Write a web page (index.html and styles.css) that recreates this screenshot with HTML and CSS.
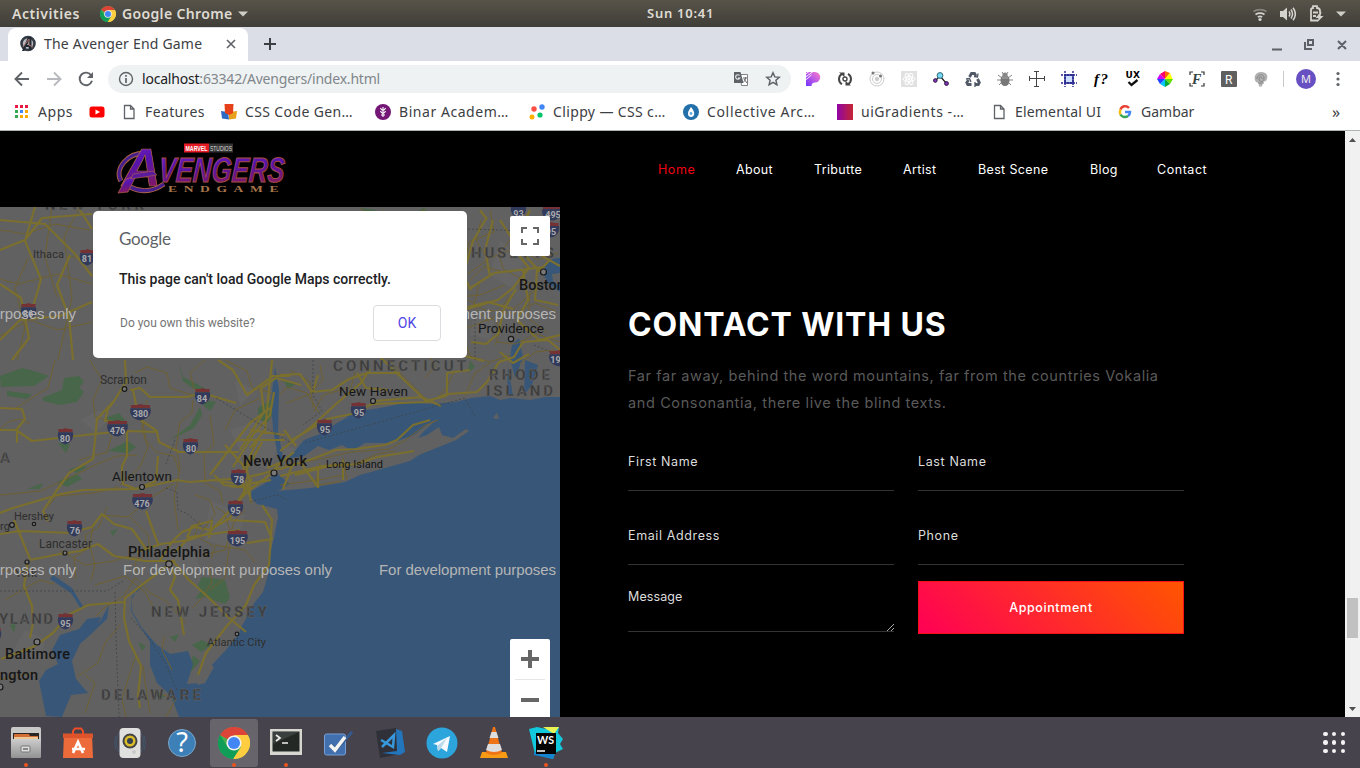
FILE: index.html
```html
<!DOCTYPE html>
<html lang="en">
<head>
<meta charset="utf-8">
<title>The Avenger End Game</title>
<link rel="stylesheet" href="styles.css">
</head>
<body>
<svg class="defs" width="0" height="0">
  <defs>
    <symbol id="chrome" viewBox="0 0 32 32">
      <circle cx="16" cy="16" r="16" fill="#4caf50"/>
      <path d="M16 16 2.1 8A16 16 0 0 1 29.9 8H16z" fill="#db4437"/>
      <path d="M16 8H29.9A16 16 0 0 1 15 32L23 20z" fill="#ffcd40"/>
      <path d="M2.1 8A16 16 0 0 0 15 32L21.5 21 9 19z" fill="#0f9d58"/>
      <circle cx="16" cy="16" r="7.6" fill="#f1f1f1"/><circle cx="16" cy="16" r="6" fill="#4285f4"/>
    </symbol>
    <symbol id="doc" viewBox="0 0 16 16"><path d="M3.500 1.500h6l3.500 3.500v9.500h-9.500zM9.500 1.500v3.500h3.500" fill="none" stroke="#5f6368" stroke-width="1.300"/></symbol>
    <symbol id="shield" viewBox="0 0 24 16" preserveAspectRatio="none">
      <path d="M2 1h6l4-1 4 1h6v3H2z" fill="#743235"/>
      <path d="M1.500 4h21c1.500 6-3 10-10.500 11.500C4.500 14.500 0 10.500 1.500 4z" fill="#323a5b"/>
    </symbol>
    <linearGradient id="purple" x1="0" y1="0" x2=".2" y2="1"><stop offset="0" stop-color="#7b22c8"/><stop offset=".5" stop-color="#5514aa"/><stop offset="1" stop-color="#85195f"/></linearGradient>
  </defs>
</svg>
<div class="desktop">
  <header class="topbar">
    <span class="activities">Activities</span>
    <span class="appmenu"><svg width="16" height="16"><use href="#chrome"/></svg><span>Google Chrome</span><svg width="10" height="6"><path d="M0 .5h10L5 5.500z" fill="#cfcdc8"/></svg></span>
    <span class="clock">Sun 10:41</span>
    <span class="tray">
      <svg width="16" height="16" viewBox="0 0 16 16" fill="none" stroke-width="1.800"><path d="M1.500 5.500a9 6 0 0 1 13 0" stroke="#86837c"/><path d="M3.500 8.500a7 5 0 0 1 9 0M5.800 11a4 3 0 0 1 4.400 0" stroke="#d5d3ce"/><circle cx="8" cy="13.500" r="1.600" fill="#d5d3ce"/></svg>
      <svg width="16" height="16" viewBox="0 0 16 16"><path d="M0 5h3l4-3.500v13L3 11H0z" fill="#d5d3ce"/><path d="M9 5.500c1 1.500 1 3.500 0 5M11 3.500c2 3 2 6 0 9M13 1.800c3 4 3 8.500 0 12.500" fill="none" stroke="#d5d3ce" stroke-width="1.500"/></svg>
      <svg width="16" height="17" viewBox="0 0 16 17"><path d="M10 15.500H3v-11q0-1.500 2-1.500V1.200h4V3q3 0 3 3v2M5 7.500h5M5 11h3" fill="none" stroke="#d5d3ce" stroke-width="1.800"/><path d="m12.500 7-5 6h3l-1 4 6-6h-3l1-4z" fill="#d5d3ce"/></svg>
      <svg width="10" height="6"><path d="M0 .5h10L5 5.500z" fill="#cfcdc8"/></svg>
    </span>
  </header>

  <div class="tabstrip">
    <div class="tab">
      <svg width="17" height="17" viewBox="0 0 17 17"><circle cx="8" cy="8.500" r="6.500" fill="#b9bcc0" stroke="#343b45" stroke-width="2.600"/><path d="M2 16 8 2h3.500v13H8.800v-3H6l-1.500 4zM9 6l-1.800 4H9z" fill="#232a34"/><path d="m3 12 6-8v6l4 2" fill="none" stroke="#a8716b"/></svg>
      <span class="tab-title">The Avenger End Game</span>
      <svg class="tab-close" width="10" height="10"><path d="m1 1 8 8M9 1 1 9" stroke="#5f6368" stroke-width="1.600"/></svg>
    </div>
    <svg class="plus" width="12" height="12"><path d="M6 0v12M0 6h12" stroke="#3b3f44" stroke-width="2"/></svg>
    <svg class="window-buttons" width="76" height="14" viewBox="0 0 76 14" fill="none" stroke="#5d6067" stroke-width="2"><path d="M0 11.500h10M33 4v7h7M36 2h5v5h-5zM66 3l8 8M74 3l-8 8"/></svg>
  </div>

  <div class="toolbar">
    <div class="nav-icons">
      <svg width="16" height="16" viewBox="0 0 16 16" fill="none" stroke="#5f6368" stroke-width="1.900"><path d="M15 8H2M8 1.500 1.500 8 8 14.500"/></svg>
      <svg width="16" height="16" viewBox="0 0 16 16" fill="none" stroke="#b7b9bc" stroke-width="1.900"><path d="M1 8h13M8 1.500 14.500 8 8 14.500"/></svg>
      <svg width="16" height="16" viewBox="0 0 16 16"><path d="M13.300 4.500A6.300 6.300 0 1 0 14 9.800" fill="none" stroke="#5f6368" stroke-width="1.900"/><path d="M15 1v6H9z" fill="#5f6368"/></svg>
    </div>
    <div class="omnibox">
      <svg width="16" height="16" viewBox="0 0 16 16"><circle cx="8" cy="8" r="6.500" fill="none" stroke="#5f6368" stroke-width="1.400"/><path d="M8 4v1.700M8 7v5" stroke="#5f6368" stroke-width="1.700"/></svg>
      <span class="url"><b>localhost</b>:63342/Avengers/index.html</span>
      <svg class="translate" width="16" height="16" viewBox="0 0 16 16"><path d="M7 3.500h7.500v11H8.500z" fill="#fff" stroke="#80848a"/><path d="M1 1h6.500l3 11H1z" fill="#5f6368"/><path d="M6.500 4.500a2.200 2.200 0 1 0 .3 2.500H5" fill="none" stroke="#e2e4e6" stroke-width="1.200"/><path d="M10 7h4M12.500 6v1c0 2-1 3-2 4M11 8l3 4" fill="none" stroke="#666"/></svg>
      <svg width="16" height="16" viewBox="0 0 16 16"><path d="m8 1.800 1.800 4.100 4.500.4-3.400 3 1 4.400L8 11.400l-3.900 2.300 1-4.400-3.400-3 4.500-.4z" fill="none" stroke="#5f6368" stroke-width="1.500"/></svg>
    </div>
    <div class="extensions">
      <svg viewBox="0 0 16 16"><defs><linearGradient id="pp" x1="1" y1="0" x2="0" y2="1"><stop stop-color="#ff7ecb"/><stop offset="1" stop-color="#7334ff"/></linearGradient></defs><path d="M1 1h9a5 5 0 0 1 0 10.500q-3.500 0-3.500 3.500H1z" fill="url(#pp)"/><path d="m0 3.500 4-3M0 6.500 8 .5M0 9.500 6.500 4" stroke="#fff" stroke-width=".9"/></svg>
      <svg viewBox="0 0 16 16" fill="none" stroke="#454545" stroke-width="2"><path d="M5 13.200A6 6 0 0 1 5 2.800M11 2.800a6 6 0 0 1 0 10.400"/><path d="M2 1.500h5.500V6zM14 14.500H8.500V10z" fill="#454545" stroke="none"/><circle cx="8" cy="8" r="2" stroke-width="1.400"/></svg>
      <svg viewBox="0 0 16 16" fill="none" stroke="#cbcbcb"><circle cx="8" cy="8" r="7"/><circle cx="8" cy="8" r="4.500"/><circle cx="8" cy="8" r="1.800" fill="#ccc"/><circle cx="4" cy="2" r="1.500" fill="#777" stroke="none"/><circle cx="11.500" cy="5" r="1.500" fill="#777" stroke="none"/></svg>
      <svg viewBox="0 0 16 16"><path d="M0 0h16v16H0z" fill="#e1e1e1"/><g fill="none" stroke="#fff"><ellipse cx="8" cy="8" rx="6" ry="2.500"/><ellipse cx="8" cy="8" rx="6" ry="2.500" transform="rotate(60 8 8)"/><ellipse cx="8" cy="8" rx="6" ry="2.500" transform="rotate(120 8 8)"/></g><circle cx="8" cy="8" r="1.500" fill="#fff"/></svg>
      <svg viewBox="0 0 16 16"><path d="M2 10 7 5l6 7" fill="none" stroke="#222" stroke-width="1.200"/><circle cx="7" cy="4.500" r="2.900" fill="#75d8f4" stroke="#336678"/><circle cx="2.300" cy="9.500" r="1.800" fill="#8135bd" stroke="#281138"/><circle cx="13.500" cy="12.500" r="1.900" fill="#8135bd" stroke="#281138"/></svg>
      <svg viewBox="0 0 16 16" fill="none" stroke="#515967" stroke-width="2.800"><path d="m4.500 6 2-3.500h3L11 5M12.500 8l1.800 3.500-1 2H10M6.500 13.500H2.800l-1-2L3.500 9"/><path d="m9 5.500 3.500.5.500-3.500M10 11v5M1 8l3.500-.5L6 11" stroke-width="1.300"/></svg>
      <svg viewBox="0 0 16 16"><path d="M1 4l4 3M15 4l-4 3M0 9h16M2 14l4-4M14 14l-4-4M5 1l2 3M11 1 9 4" stroke="#858585"/><ellipse cx="8" cy="9.500" rx="4.500" ry="5.500" fill="#777"/><circle cx="8" cy="4" r="2.600" fill="#888"/><path d="M5 7h6" stroke="#aaa"/></svg>
      <svg viewBox="0 0 16 16" fill="none" stroke="#444"><path d="M7.500 1v14M1 7.500h14M5 .5h5M5 15.500h5M.5 5v5M15.500 5v5"/></svg>
      <svg viewBox="0 0 16 16" fill="none" stroke="#24248d" stroke-width="1.400"><path fill="#cfe0ff" d="M4 4h8v8H4z"/><path d="M4 0v16M12 0v16M0 4h16M0 12h16" stroke-dasharray="2 1"/></svg>
      <svg viewBox="0 0 16 16"><text class="serif-icon" x="1" y="12.500" textLength="14">f?</text></svg>
      <svg viewBox="0 0 16 16"><text class="ux-icon" x=".5" y="7" textLength="14.500">UX</text><path d="m3.500 11 3 3 6-5" fill="none" stroke="#111" stroke-width="2.300"/></svg>
      <svg viewBox="0 0 16 16"><path d="M8 8V0l5 2z" fill="#ff6700"/><path d="m8 8 5-6 2.500 6z" fill="#ff0"/><path d="M8 8h8l-3 5z" fill="#64e000"/><path d="m8 8 5 5-5 3z" fill="#00a938"/><path d="M8 8v8l-5-3z" fill="#00c8ff"/><path d="m8 8-5 5-3-5z" fill="#2445ff"/><path d="M8 8H0l3-5z" fill="#d000ff"/><path d="M8 8 3 3l5-3z" fill="#f06"/></svg>
      <svg viewBox="0 0 16 16"><path d="M1 4V1h3M12 1h3v3M15 12v3h-3M4 15H1v-3" fill="none" stroke="#333" stroke-width="1.200"/><text class="script-icon" x="3" y="13">F</text></svg>
      <svg viewBox="0 0 16 16"><rect width="16" height="16" rx="1" fill="#5f5f5f"/><text class="r-icon" x="4" y="12.500">R</text></svg>
      <svg viewBox="0 0 16 16"><path d="M3 11C0 7 2 1 8 1s8 4 5 9l-3 1-1 4.500H6L5.500 12z" fill="#b1b1b1"/><path d="M4 8c0-5 7-6 7-1s-5 4-5 1 3-3 3 0M5 12h6" fill="none" stroke="#858585"/></svg>
    </div>
    <span class="divider"></span><span class="avatar">M</span>
    <svg width="4" height="16"><g fill="#5f6368"><circle cx="2" cy="2.500" r="1.600"/><circle cx="2" cy="8" r="1.600"/><circle cx="2" cy="13.500" r="1.600"/></g></svg>
  </div>

  <nav class="bookmarks">
    <span class="bm"><svg viewBox="0 0 16 16"><path d="M1 1h3v3H1zM6 1h3v3H6zM11 1h3v3h-3z" fill="#ea1744"/><path d="M1 6h3v3H1zM1 11h3v3H1z" fill="#34a853"/><path d="M6 6h3v3H6z" fill="#4285f4"/><path d="M11 6h3v3h-3zM6 11h3v3H6zM11 11h3v3h-3z" fill="#fbaa05"/></svg><span class="t1">Apps</span></span>
    <span class="bm"><svg viewBox="0 0 16 16"><rect y="2.500" x=".5" width="15" height="11" rx="2.500" fill="red"/><path d="M6.500 5.500v5L11 8z" fill="#fff"/></svg></span>
    <span class="bm"><svg><use href="#doc"/></svg><span class="t2">Features</span></span>
    <span class="bm"><svg viewBox="0 0 16 16"><path d="m0 7 7 1 1 7.500-7-1z" fill="#2b6bc4"/><path d="M16 7 8 8v7.500l7-1z" fill="#e9a11c"/><path d="M3.500 0h9L12 9l-4 2-4-2z" fill="#e54019"/></svg><span class="t3">CSS Code Gen…</span></span>
    <span class="bm"><svg viewBox="0 0 16 16"><circle cx="8" cy="8" r="8" fill="#731675"/><path d="M8 3v10M5.500 4q1 2.500 2.500 2 1.500.5 2.500-2M5.500 7q1 2.500 2.500 2 1.500.5 2.500-2M6 11h4" fill="none" stroke="#fff" stroke-width="1.100"/></svg><span class="t4">Binar Academ…</span></span>
    <span class="bm"><svg viewBox="0 0 16 16"><circle cx="5" cy="5" r="2.700" fill="#fb4f43"/><circle cx="13" cy="3" r="2.700" fill="#4285f4"/><circle cx="3" cy="13" r="2.500" fill="#fbb100"/><circle cx="11" cy="11" r="2.600" fill="#07c46b"/></svg><span class="t5">Clippy — CSS c…</span></span>
    <span class="bm"><svg viewBox="0 0 16 16"><circle cx="8" cy="8" r="8" fill="#236fa9"/><path d="M8 3q5 6 2.500 9-2.500 2-5 0Q3.500 9 8 3" fill="#fff"/><circle cx="8" cy="9.500" r="1.400" fill="#63aade"/></svg><span class="t6">Collective Arc…</span></span>
    <span class="bm"><i class="gradient-icon"></i><span class="t7">uiGradients -…</span></span>
    <span class="bm"><svg><use href="#doc"/></svg><span class="t8">Elemental UI</span></span>
    <span class="bm"><svg viewBox="0 0 16 16" fill="none" stroke-width="2.500"><path d="M12 4A5 5 0 0 0 3.500 5.500" stroke="#ea4335"/><path d="M3.500 5.500a5 5 0 0 0 0 5" stroke="#fbbc05"/><path d="M3.500 10.500A5 5 0 0 0 11 12" stroke="#34a853"/><path d="M8 8h5c0 2-.5 3-2 4" stroke="#4285f4"/></svg><span class="t9">Gambar</span></span>
    <span class="more">»</span>
  </nav>

  <div class="viewport">
    <main class="page">
      <header class="site-header">
        <svg class="logo" width="172" height="54" viewBox="117 142 172 54">
          <rect x="184" y="143.500" width="25" height="9" fill="#e51b25"/><rect x="209" y="143.500" width="24" height="9" fill="#333"/><text class="marvel" x="185.500" y="151.300" textLength="22" lengthAdjust="spacingAndGlyphs">MARVEL</text><text class="studios" x="210" y="151.300" textLength="22" lengthAdjust="spacingAndGlyphs">STUDIOS</text>
          <path d="M145 153C127 153 114 169 121 181M130 187C142 193 154 191 164 184" fill="none" stroke="#b16544" stroke-width="5"/>
          <path d="M145 153C127 153 114 169 121 181M130 187C142 193 154 191 164 184" fill="none" stroke="#45208c" stroke-width="3.200"/>
          <text class="big-a" x="122" y="186" textLength="39" lengthAdjust="spacingAndGlyphs">A</text>
          <path d="m118 193 8-14 10-3-8 16z" fill="url(#purple)" stroke="#b16544" stroke-width=".7"/>
          <path d="m133 174 20-3 4 4-26 4z" fill="#5a1b9d" stroke="#b16544" stroke-width=".6"/>
          <text class="vengers" transform="translate(158 182) skewX(-4)" textLength="126" lengthAdjust="spacingAndGlyphs">VENGERS</text>
          <text class="endgame" transform="translate(168 192) scale(1.700 1)" textLength="65" lengthAdjust="spacing">ENDGAME</text>
        </svg>
        <nav class="site-nav"><a class="active n1">Home</a><a class="n2">About</a><a class="n3">Tributte</a><a class="n4">Artist</a><a class="n5">Best Scene</a><a class="n6">Blog</a><a class="n7">Contact</a></nav>
      </header>
      <div class="content">
        <section class="map">
          <svg class="map-art" width="560" height="510" viewBox="0 207 560 510">
            <rect y="207" width="560" height="510" fill="#616161"/>
            <g fill="#656565"><path d="M230 430l30-10 20 20-10 30-25-10zM210 500l35 15-10 35-30-10zM160 550l30-8 10 25-30 8zM235 380l20 10-15 15zM280 445l20 5-10 20-15 5zM500 240l25 20-10 30-25-15zM80 420l20-10 10 10-15 12zM475 310l20 10-5 20-20-5zM25 630l20 10-5 20-30-5z"/></g>
            <g fill="#486649"><path d="M0 376l22-8 15 4 12 4-15 10-33 1zM7 391l25 3-5 5-20-3zM42 398l20-8 2-12 15-2 5 6-5 5 5 5-7 10-18 3-15-4zM105 418l14-5 10 12-10 7zM108 451l20-10 8 6-8 6zM68 470l14-5 5 2-10 6zM57 482l20-8 5 5-15 8zM27 489l16-6-3 6zM58 443l12 1-4 9zM170 440l20-15 10-18 2 8-8 13zM178 361l5 16 10 5 15 8-5 3-12-6-8-6zM205 400l11 2-6 9-7-6zM258 408l12-8 6 8-8 14-10-2zM284 381l12 3-8 5zM470 360l5 7-7 6zM198 585l4-8 23 3 5 18-5 6-20-7-10 2 6-8zM170 637l9-3-4 8zM192 645l10-5 9 5-10 7zM138 642l8 4-4 5zM188 675l5-20 7 6zM110 532l8-4-5 8zM360 208l16 2-8 4zM416 212l8-4 4 4zM10 625l6-2-2 10zM155 690l10 6-6 5z"/></g>
            <g fill="#385778"><path d="M560 397 545 397 530 400 511 398 500 400 490 396 471 398 455 402 430 404 410 402 380 408 367 410 354 411 346 418 337 423 320 434 304 440 294 452 286 459 279 467 273 475 267 482 252 491 250 497 257 504 277 509 278 517 274 537 270 555 268 575 263 592 255 602 244 618 239 634 225 651 210 667 199 683 187 684 193 664 188 651 170 654 156 644 142 628 132 611 132 599 137 590 147 580 167 566 166 564 151 577 141 588 132 596 131 611 139 625 150 642 150 665 157 683 171 696 179 717 560 717z"/><path d="M109 605l-2 14-18 17-9 8-8 17 4 18 12 14-17 2-9 22-16-1-4-20-3-15 7-11 12-6-6-14 8-15 19-6 8-10 14-2-3 8zM53 575l-3 4 21 14 10 16 3-1-12-20z"/><path d="M543 274q3-17 17-16v15l-8 1 1 7 7 5v6l-11-8zM512 345l7-7 4 20-8 20-5-20zM525 360l13 5-6 20-8 10zM508 366l5 30-6-2zM275 367l4 22-1 43 5 25-4 6-6-34-2-29z"/></g>
            <path d="M270 468 285 459 304 456 318 446 329 450 342 445 352 451 365 443 392 443 414 435 431 422 436 420 424 431 418 438 427 435 439 427 442 435 453 438 466 429 469 431 456 440 419 455 410 461 360 475 345 482 310 488 278 491 290 484z" fill="#616161"/>
            <path d="m493 418 4-5 2 6zM240 629l6-10 3-17-6 8-6 14zM197 685l8-2 9-16-4-3-9 12z" fill="#616161"/>
            <g class="minor-road"><path d="M55 360l-7 28-15 9-18 12M90 360l12 20-9 20 2 17 20 5-5 20-3 10-28 8M135 373l12-6 20 6 3 15 25 8M205 360l-15 13 4 16 15 8M193 400l-1 13-12 9-4 25 4 21-6 30 4 32M210 415l4 30-10 8 1 30 15 8 3 12M0 495l40-4 27-12 30-15 20-8 20-1M48 507l8-11 38-3 25-6M0 429l10-8 10-2 10 5M120 485l20-18 8-20-6-18 2-18M147 400l-5 18 4 22 10 12 18 4 5 15M225 360l22 11 5 17 20 5M225 430l10-20 25-12M107 507l-8 20-14 8 2 14-13 8 2 22M100 515l30 2 18 18 2 15-15 13 2 10M130 515l25-20 20-12M60 550l25 15 28-4 16-5 12 3M95 585l30-9 20 16 12 22M135 578l-11 18-20 12-8 8M93 525l-3 20 5 20-4 15M209 565l3 17-8 13-11 13M200 520l-5 15 20 12-4 12M230 530l-6-18-8-5M215 545l30 5 10 12M135 577l15 16 16 8 20 22M230 543l-5 35-15 12M195 495l15 5 5 14-15 21M78 676l20-13 7-20 15-18M136 655l-8 24-6 20 4 18M166 717l10-18-25-8M85 675l10 8-10 30M0 680l35-8M143 665l2 18 5 30M0 570l30 2M172 670l-10-20 2-14M245 510l-10 10-10 30-22 5M5 600l20-12 15-8 14 4"/><path d="M290 370l20 12 3 26M320 365l3 15-15 15-22 8M355 372l-4 15-28 8-9 17M388 358l12 15 25 25M430 357l5 9-10 12M455 370l-9 19-8 8M490 363l-15 10-10 23M510 355l-20 7-20-6-6-18M505 285l-25 10-20 2M468 300l17 10 30 3 20-10 20 8M490 210l4 22-25 10-5 25M513 236l-14 18 4 15 30 16M520 250l18 10 20-7M555 235l-40 13-25 10-22 16M530 291l-2 27 20 15M552 212l-25 20M495 345l6-17-9-10-27 11M480 280l-6 26 15 16M511 295l-20 25M535 290l-22 20M497 342l18 2 22-10 23 8M555 350l-20 2-15 12M280 395l7-8 20 6 12 20M360 208l14 10 10-8M425 209l-16 10M488 260l-12-20 5-20M470 280l14-13 20 5"/><path d="M280 466l30-5 42-9 37-3 15-8 20-15 14-6M295 474l22-7 35-2 25-11 18-3M320 463l-5 23 26-5M343 457l4 23M280 485l38-5 25-5"/><path d="M90 252l-8 7-14-3M0 230l25 4 30-10 35 6M0 279l18 5 40-10 34 10M0 336l30-16 28 10 34-8M52 207l-7 50 12 40M80 207l-16 30 8 60-14 63M28 258l-13 30 10 40-8 32"/></g>
            <g class="road"><path d="M0 408l22 1 3 10-8 10 0 14M0 430l16 0 16 11 62-7 33-3 30 1 2 10 20 10 60 0M125 360l1 22-12 19-17 18-2 22-2 18-24 14-14 20-12 18 5 10M130 390l10-2 10 9 37 0 15-4 34 10M133 390l6 29 18 12M114 401l-6 8-3 12 8 1M127 432l0 24-5 10 1 18 13 5 20-8 2-25M136 489l27-6 14-3 12 2 26-2 22 4M0 513l13-5 48-14 22-4 53-1M0 534l20-3 50 2 22-6 10-13 12 10 18 5 14 20M14 520l16 39M28 560l-4 26 8 20 1 17-3 15M30 560l30-6 20-3 18-7 16 12 31 5 27 0M146 511l12 33M137 552l24-8 28-4 20-7 23-25 16-17 20-15 14-15M160 560l12-18 10-10 13-5 15 3 20-12 10-20 12-19M171 565l4 12-5 13 8 10 6 35M172 560l16 19 20 18 20 20 18 15M175 560l-24 18-26 20-1 20 5 23 12 25-3 30 2 12M124 602l-36 3-20 10-15 18-20 14-32 12M262 505l10 15-3 45-15 20-8 20-20 22-20 26-8 22M251 503l-2-15-25-3-10-10M210 475l15-20 25-32 20-15M217 480l28-2 20-5 15-5M240 450l24-38-3-24 15-10 25 7M233 467l20-32 17-20 4-23M245 495l-3-18 20-35M250 430l35 5M237 440l48 0M231 487l40-7M225 445l18 20 6 30M258 439l-12 26 5 25M187 538l5-12 20-5-3 17M175 552l15-15 50-7M230 520l35 2 7 17-25 4M218 360l15 10 14 25 26-19 17 0M272 360l-4 40-3 30-15 18"/><path d="M280 375l20-1 12 18 20-2 17-11 18-6 33 0M318 375l-5 16M292 440l35-21 25-5 20-10 55-2 20-8 30-2 10-10 12-20 15-5 9-15 25-2 12 10 15 6M280 451l32-25 24-22 25-21 9-14M357 373l9 15 22 2M380 357l46 44 20-5M375 401l46-4 20 9M447 396l0-23 23-3M294 452l-12 10-15 6M284 430l12 16M471 290l-8-15 10-34 14-24M469 289l25-16 50-6M490 276l-5-26 8-30M500 220l16 25 23 26 10-10M515 250l14 18-16 20-15 12-31 9M516 289l-12 20-6 25-12 10-15-2M523 270l5 30-11 20 22 20 21-5M537 270l-2 30 23 5M468 307l20-5 25 7M500 352l13 11 16-9M530 210l-9 19 12 22 27 15M460 355l24 6M480 210l6 8"/><path d="M280 469l32-10 24-9 20-1 29-4 12-5 16-15 17-5M280 476l42-10 35-2 20-7 37-6M283 489l9-23M300 462l18 25M318 466l0 22M343 460l0 20M295 475l42-11"/><path d="M0 250l25-10 17-22 50-4M78 207l14 22M0 220l45 4 30 30 17 22M0 340l20-20 40-4 32-14M35 207l-10 34 16 38-10 35M70 255l-13 30 12 32 4 43M12 360l17-22-8-40-21-14"/></g>
            <g class="border"><path d="M216 398l75 45M305 443l160-45 10 18M166 488l11 4 1 18 10 4 16 15M175 440l-9 24M0 591h107l16-10M115 592l1 45 3 80M131 618l18 20 16 25 12 27M468 229l92 3M475 315l0 45M534 345l25 10M250 502l27-7 9 4M313 360l0 35 9 16-19 14"/></g>
            <g class="shields">
              <g><use href="#shield" x="194" y="388" width="17" height="17"/><text x="202" y="402">84</text></g>
              <g><use href="#shield" x="129" y="404" width="23" height="17"/><text x="140.500" y="417">380</text></g>
              <g><use href="#shield" x="106" y="420" width="23" height="17"/><text x="117.500" y="433.500">476</text></g>
              <g><use href="#shield" x="57" y="428" width="17" height="17"/><text x="65" y="442">80</text></g>
              <g><use href="#shield" x="182" y="438" width="17" height="17"/><text x="191" y="452">80</text></g>
              <g><use href="#shield" x="230" y="469" width="17" height="17"/><text x="239" y="483">78</text></g>
              <g><use href="#shield" x="131" y="493" width="23" height="17"/><text x="142" y="507">476</text></g>
              <g><use href="#shield" x="66" y="520" width="17" height="17"/><text x="75" y="534">76</text></g>
              <g><use href="#shield" x="227" y="500" width="17" height="17"/><text x="235.500" y="514">95</text></g>
              <g><use href="#shield" x="226" y="530" width="23" height="17"/><text x="237.500" y="544">195</text></g>
              <g><use href="#shield" x="57" y="613" width="17" height="17"/><text x="65.500" y="627">95</text></g>
              <g><use href="#shield" x="316" y="419" width="17" height="17"/><text x="325" y="433">95</text></g>
              <g><use href="#shield" x="350" y="402" width="17" height="17"/><text x="359" y="416">95</text></g>
              <g><use href="#shield" x="510" y="203" width="17" height="15"/><text x="518.500" y="217">93</text></g>
              <g><use href="#shield" x="541" y="205" width="23" height="16"/><text x="553" y="218">495</text></g>
              <g><use href="#shield" x="543" y="222" width="17" height="16"/><text x="551" y="235">95</text></g>
              <g><use href="#shield" x="548" y="350" width="23" height="17"/><text x="558" y="363">195</text></g>
              <g><use href="#shield" x="79" y="249" width="17" height="17"/><text x="87" y="262">81</text></g>
              <g><use href="#shield" x="20" y="303" width="17" height="17"/><text x="28" y="317">86</text></g>
              <g><use href="#shield" x="-14" y="627" width="16" height="17"/></g>
            </g>
            <g class="states"><text x="45" y="210" textLength="99">NEW YORK</text><text x="333" y="370.500" textLength="133">CONNECTICUT</text><text x="471" y="258" textLength="83">HUSETTS</text><text x="489" y="380" textLength="61">RHODE</text><text x="486" y="396" textLength="67">ISLAND</text><text x="151" y="617" textLength="116">NEW JERSEY</text><text x="-1" y="624" textLength="54">YLAND</text><text x="101" y="700" textLength="100">DELAWARE</text><text x="0" y="463">A</text></g>
            <g class="cities"><text x="33" y="258" textLength="31" class="small">Ithaca</text><text x="100" y="384" textLength="47" class="small wide">Scranton</text><text x="339" y="396" textLength="69" class="medium">New Haven</text><text x="478" y="333" textLength="66" class="medium">Providence</text><text x="519" y="290" class="major">Boston</text><text x="112" y="481" textLength="60" class="medium">Allentown</text><text x="243" y="466" textLength="64" class="major">New York</text><text x="326" y="468" textLength="57" class="small bright">Long Island</text><text x="14" y="520" textLength="40" class="small">Hershey</text><text x="0" y="530" class="small">rg</text><text x="39" y="548" textLength="53" class="small wide">Lancaster</text><text x="128" y="557" textLength="82" class="major">Philadelphia</text><text x="15" y="577" class="small">York</text><text x="207" y="646" textLength="59" class="small">Atlantic City</text><text x="5" y="659" textLength="65" class="major">Baltimore</text><text x="0" y="680" textLength="38" class="major">ngton</text></g>
            <g class="markers"><circle cx="124.500" cy="389" r="2.300"/><circle cx="373" cy="401" r="2.500"/><circle cx="511" cy="339" r="2.700"/><circle cx="543.500" cy="272" r="3"/><circle cx="142" cy="487" r="2.500"/><circle cx="274" cy="473" r="3"/><circle cx="34" cy="524" r="1.700"/><circle cx="12" cy="525" r="2.300"/><circle cx="65" cy="553" r="2"/><circle cx="169" cy="564" r="3.200"/><circle cx="27" cy="562" r="2"/><circle cx="237" cy="634" r="1.800"/><circle cx="37" cy="642" r="3"/><circle cx="0" cy="687" r="3"/></g>
            <g class="watermark"><text x="-133" y="318.500" textLength="209">For development purposes only</text><text x="379" y="318.500" textLength="177">For development purposes</text><text x="-133" y="574.500" textLength="209">For development purposes only</text><text x="123" y="574.500" textLength="209">For development purposes only</text><text x="379" y="574.500" textLength="177">For development purposes</text></g>
          </svg>
          <div class="dialog"><div class="google">Google</div><div class="dialog-message">This page can't load Google Maps correctly.</div><div class="dialog-row"><span>Do you own this website?</span><button>OK</button></div></div>
          <div class="fullscreen"><svg width="18" height="18" fill="none" stroke="#666" stroke-width="2"><path d="M1 6V1h5M12 1h5v5M17 12v5h-5M6 17H1v-5"/></svg></div>
          <div class="map-zoom"><span><svg width="18" height="18"><path d="M9 0v18M0 9h18" stroke="#666" stroke-width="4"/></svg></span><span><svg width="18" height="18"><path d="M0 9h18" stroke="#666" stroke-width="4"/></svg></span></div>
        </section>
        <section class="contact">
          <h1>CONTACT WITH US</h1>
          <p><span class="l1">Far far away, behind the word mountains, far from the countries Vokalia</span><br><span class="l2">and Consonantia, there live the blind texts.</span></p>
          <div class="form"><label>First Name</label><label>Last Name</label><label>Email Address</label><label>Phone</label><div class="message"><span>Message</span><svg width="8" height="8"><path d="M1 8 8 1M5 8l3-3" stroke="#aaa"/></svg></div><button class="submit">Appointment</button></div>
        </section>
      </div>
    </main>
    <div class="scrollbar"><svg width="7" height="4"><path d="M0 4h7L3.500 0z" fill="#505050"/></svg><i></i><svg width="7" height="4"><path d="M0 0h7L3.500 4z" fill="#505050"/></svg></div>
  </div>

  <footer class="dock">
    <span class="app open"><svg viewBox="0 0 32 32"><defs><linearGradient id="silver" x1="0" y1="0" x2="0" y2="1"><stop stop-color="#ccc"/><stop offset="1" stop-color="#929292"/></linearGradient></defs><path d="M1 2q0-2 2-2h26q2 0 2 2v12H1z" fill="#c9c9c7"/><path d="M3 6h26v7H3z" fill="#292524"/><path d="M4 7h15l1 2h8v4H4z" fill="#d46e37"/><path d="M4 10h24v3H4z" fill="#edc998"/><path d="M1 12h30v18q0 1-1 1H2q-1 0-1-1z" fill="url(#silver)"/><rect x="11" y="19" width="9" height="6" rx="1" fill="#ddd" stroke="#777"/><path d="M13 22h5" stroke="#888" stroke-width="2"/></svg></span>
    <span class="app"><svg viewBox="0 0 32 32"><path d="M2 7h28l1 24H1z" fill="#ed6b3a"/><path d="M1 6.500h30V11H1z" fill="#da552b"/><path d="M11 10V4l2-2.500h6L21 4v6" fill="none" stroke="#ee4d26" stroke-width="2"/><path d="m11 26 5-11 5 11M10 22h13" fill="none" stroke="#fff" stroke-width="2.700"/></svg></span>
    <span class="app"><svg viewBox="0 0 32 32"><path d="M5 6q-5 9 0 19M27 6q5 9 0 19M2 9q-3 7 0 14M30 9q3 7 0 14" fill="none" stroke="#3e6484" opacity=".6"/><rect x="5.500" y="1" width="21" height="30" rx="4" fill="#e0e0df"/><circle cx="16" cy="14" r="7.500" fill="#444"/><circle cx="16" cy="14" r="5.500" fill="#dbbd28"/><circle cx="16" cy="14" r="3" fill="#354150"/><circle cx="20" cy="25" r="2" fill="#c9c9c9"/></svg></span>
    <span class="app"><svg viewBox="0 0 32 32"><circle cx="16" cy="16" r="13.500" fill="#3d7fb7" stroke="#79a7cb"/><text class="help-icon" x="16" y="25">?</text></svg></span>
    <span class="app open selected"><svg viewBox="0 0 32 32"><use href="#chrome"/></svg></span>
    <span class="app open"><svg viewBox="0 0 32 32"><path d="M0 2h32v26H0z" fill="#d7d7cf"/><path d="M2.500 4.500h27v20h-27z" fill="#232825"/><path d="M3 5h26L3 17z" fill="#3a403d"/><path d="m6 8 4 3-4 3M12 16h6" fill="none" stroke="#eee" stroke-width="1.700"/></svg></span>
    <span class="app"><svg viewBox="0 0 32 32"><rect x="2.500" y="7" width="21" height="21" rx="2" fill="#4270ae" stroke="#759ed3"/><path d="m9 17 5 6L30 5" fill="none" stroke="#355a91" stroke-width="3"/><path d="m8 18 5 5 10-13" fill="none" stroke="#f4f4f0" stroke-width="3.500"/></svg></span>
    <span class="app"><svg viewBox="0 0 32 32"><path d="m2 4 20-3 4 26-20 4z" fill="#303138"/><path d="M22 2l6 2 3 21-5 3-18-2 15-2z" fill="#2375bc"/><path d="m7 13 12 7 1-12L8 20" fill="none" stroke="#3798de" stroke-width="2.500"/></svg></span>
    <span class="app"><svg viewBox="0 0 32 32"><circle cx="16" cy="16" r="15.500" fill="#2ca5dc"/><path d="m7 17 17-8-3 16-6-4-3 3-1-6z" fill="#f4faff"/><path d="m11 19 10-8-6 10-3 3z" fill="#bad9ea"/></svg></span>
    <span class="app"><svg viewBox="0 0 32 32"><path d="m4 25-2 6h28l-2-6z" fill="#f89b14"/><path d="M15 0h2l7 26q-8 4-16 0z" fill="#ee7417"/><path d="m13.500 5h5l2 6h-9zM10 17h12l2 6q-8 4-16 0z" fill="#ddd"/></svg></span>
    <span class="app open"><svg class="webstorm" viewBox="0 0 34 32"><path d="m0 2 8-2 9 2 13-2-1 6 5 6-3 5 3 5-8 4-2 6-18-5z" fill="#11c8dc"/><path d="M14 0h16l-5 7z" fill="#e9f353"/><path d="m5 25 21-1-2 8-19-4z" fill="#1685d1"/><path d="M7 6h20v21H7z" fill="#050505"/><text class="ws-icon" x="8" y="17" textLength="17" lengthAdjust="spacingAndGlyphs">WS</text><path d="M8 24h8" stroke="#fff" stroke-width="1.500"/></svg></span>
    <span class="launcher"><i></i><i></i><i></i><i></i><i></i><i></i><i></i><i></i><i></i></span>
  </footer>
</div>
</body>
</html>
```
FILE: styles.css
```css
* { box-sizing: border-box; }
body { margin: 0; overflow: hidden; background: #000; font-family: "Noto Sans", sans-serif; font-size: 14px; }
svg { display: block; flex: none; }
.defs { position: absolute; }
.desktop { width: 1360px; height: 768px; display: flex; flex-direction: column; }
.topbar { height: 27px; flex: none; display: grid; grid-template-columns: 88px 547px 70px 1fr; align-items: center; padding: 0 14px 0 12px; background: linear-gradient(#575349, #403e39); color: #dfdbd2; font-weight: 600; white-space: nowrap; }
.activities { letter-spacing: .55px; }
.appmenu, .tray { display: flex; align-items: center; gap: 6px; }
.appmenu span { letter-spacing: .35px; }
.clock { font-size: 13px; letter-spacing: .75px; padding-bottom: 2px; }
.tray { justify-content: flex-end; gap: 12px; }
.tabstrip { height: 34px; flex: none; background: #dbdee7; display: flex; align-items: center; padding: 1px 12px 0 8px; color: #3c4043; }
.tab { width: 240px; height: 33px; display: flex; align-items: center; padding: 0 12px 2px; background: #fff; border-radius: 8px 8px 0 0; white-space: nowrap; }
.tab-title { margin-left: 7px; letter-spacing: .2px; }
.tab-close { margin-left: auto; }
.plus { margin-left: 16px; margin-bottom: 1px; }
.window-buttons { margin-left: auto; }
.toolbar { height: 36px; flex: none; background: #fff; display: flex; align-items: center; padding-left: 14px; }
.nav-icons { display: flex; gap: 16px; width: 94px; }
.omnibox { width: 683px; height: 28px; border-radius: 14px; background: #eff2f3; display: flex; align-items: center; padding: 0 10px; color: #80868b; white-space: nowrap; }
.url { margin-left: 8px; letter-spacing: -.2px; padding-bottom: 1px; }
.url b { color: #202124; font-weight: 400; }
.translate { margin-left: auto; margin-right: 16px; }
.extensions { display: flex; gap: 16px; margin-left: 14px; }
.extensions svg { width: 16px; height: 16px; }
.divider { width: 1px; height: 16px; background: #c8cacd; margin-left: 14px; }
.avatar { width: 20px; height: 20px; margin: 0 20px 0 12px; border-radius: 50%; background: #6750c2; color: #eee; font-size: 11px; line-height: 20px; text-align: center; }
.serif-icon { font: italic bold 15px "Liberation Serif", serif; }
.ux-icon { font: bold 9px "DejaVu Sans", sans-serif; }
.script-icon { font: italic bold 14px "Liberation Serif", serif; fill: #34443f; }
.r-icon { font: 12px Roboto, sans-serif; fill: #fff; }
.bookmarks { height: 34px; flex: none; display: grid; grid-template-columns: 75px 32px 100px 154px 154px 154px 154px 154px 126px 215px auto; align-items: center; padding: 0 0 4px 14px; color: #3c4043; background: #fff; border-bottom: 1px solid #aeb3b3; white-space: nowrap; }
.bm { display: flex; align-items: center; gap: 8px; }
.bm svg, .gradient-icon { width: 16px; height: 16px; }
.gradient-icon { background: linear-gradient(90deg, #9004a5, #c42633); }
.t1, .t4, .t7 { letter-spacing: .55px; }
.t2, .t3, .t5 { letter-spacing: .37px; }
.t6 { letter-spacing: .65px; }
.t8 { letter-spacing: .17px; }
.more { font-size: 16px; line-height: 18px; }
.viewport { height: 586px; flex: none; display: flex; }
.page { width: 1345px; background: #000; color: #fff; }
.site-header { height: 76px; display: flex; padding-left: 117px; }
.logo { margin-top: 11px; overflow: visible; }
.marvel, .studios { font: bold 8px "Liberation Sans", sans-serif; fill: #fff; }
.studios { font-weight: 400; fill: #ddd; }
.big-a { font: italic bold 54px "Liberation Sans", sans-serif; fill: url(#purple); stroke: #b16544; stroke-width: .7px; }
.vengers { font: italic bold 35px "Liberation Sans", sans-serif; fill: url(#purple); stroke: #a34c43; stroke-width: 1px; }
.endgame { font: bold 8px "Liberation Serif", serif; fill: #a8754a; }
.site-nav { display: grid; grid-template-columns: 78px 78px 89px 75px 112px 67px 52px; align-items: center; margin-left: 369px; font: 12.5px Inter, sans-serif; letter-spacing: .35px; white-space: nowrap; }
.n1, .n7 { letter-spacing: .55px; }
.active { color: #f00010; }
.content { display: flex; height: 510px; }
.map { position: relative; width: 560px; overflow: hidden; }
.minor-road, .road, .border { fill: none; stroke-linejoin: round; }
.minor-road { stroke: #6e6030; stroke-width: 1px; }
.road { stroke: #7b6f2e; stroke-width: 2.2px; }
.border { stroke: #3f4347; stroke-width: .8px; stroke-dasharray: 2 2; }
.shields text { font: bold 9px Roboto, sans-serif; fill: #aaa; text-anchor: middle; }
.states { font: bold 15px Roboto, sans-serif; fill: #3c3c3c; stroke: #666; stroke-width: .3px; }
.cities { fill: #161616; font-family: Roboto, sans-serif; }
.small { font-size: 11px; fill: #2e2e2e; }
.wide { font-size: 12px; }
.bright { fill: #151515; }
.medium { font-size: 13.5px; }
.major { font-size: 14.5px; font-weight: 500; }
.markers { fill: #777; stroke: #191919; stroke-width: 1.2px; }
.watermark { font: 15px "Liberation Sans", sans-serif; fill: #b5b5b5; }
.dialog { position: absolute; left: 93px; top: 4px; width: 374px; height: 147px; background: #fff; border-radius: 5px; padding: 17px 26px; font-family: Roboto, sans-serif; color: #202124; white-space: nowrap; }
.google { font: 17px/22px Lato, sans-serif; color: #5f6368; letter-spacing: -.3px; }
.dialog-message { margin-top: 18px; font-weight: 500; line-height: 22px; }
.dialog-row { display: flex; justify-content: space-between; align-items: center; margin-top: 15px; font-size: 12px; color: #757575; padding-left: 1px; }
.dialog button { width: 68px; height: 36px; border: 1px solid #dadce0; border-radius: 4px; background: #fff; color: #5146e5; font: 14px Roboto, sans-serif; }
.fullscreen, .map-zoom { position: absolute; right: 10px; width: 40px; background: #fff; border-radius: 2px; }
.fullscreen { top: 9px; height: 40px; display: grid; place-items: center; }
.map-zoom { top: 432px; height: 81px; padding: 0 5px; }
.map-zoom span { height: 40px; display: grid; place-items: center; }
.map-zoom span + span { height: 41px; border-top: 1px solid #e6e6e6; }
.contact { padding: 97px 0 0 68px; font-family: Inter, sans-serif; }
h1 { margin: 0; font: bold 32px/42px Inter, sans-serif; letter-spacing: .85px; white-space: nowrap; }
p { margin: 16px 0 0; font-size: 14.5px; font-weight: 400; line-height: 27px; color: #5a5a5a; white-space: nowrap; }
.l1 { letter-spacing: .58px; }
.l2 { letter-spacing: .62px; }
.form { display: grid; grid-template-columns: 266px 266px; column-gap: 24px; grid-template-rows: 74px 69px 53px; margin-top: 22px; font-size: 12.5px; letter-spacing: .62px; }
.form label { height: 53px; line-height: 47px; border-bottom: 1px solid #333; color: #ddd; }
.message { height: 51px; border-bottom: 1px solid #333; color: #ddd; line-height: 31px; letter-spacing: .1px; display: flex; justify-content: space-between; align-items: flex-start; }
.message svg { align-self: flex-end; }
.submit { border: 1px solid #f31016; background: linear-gradient(45deg, #f05, #f50); color: #fff; font: 500 12.5px Inter, sans-serif; letter-spacing: .6px; }
.scrollbar { width: 15px; background: #f1f1f1; display: flex; flex-direction: column; align-items: center; padding: 7px 0 6px; }
.scrollbar i { width: 11px; height: 40px; margin: 456px 0 auto; background: #c1c1c1; }
.dock { height: 51px; flex: none; background: #46434c; display: flex; padding-right: 15px; }
.app { width: 48px; height: 48px; margin: 2px 2px 1px; position: relative; display: grid; place-items: center; }
.app svg { width: 32px; height: 32px; }
.app .webstorm { width: 34px; }
.selected { background: #67646c; border-radius: 3px; }
.open::after { content: ""; position: absolute; left: 22px; bottom: 0; width: 4px; height: 4px; border-radius: 50%; background: #e95420; }
.help-icon { font: 27px "Noto Sans", sans-serif; fill: #fff; text-anchor: middle; }
.ws-icon { font: bold 12px Lato, sans-serif; fill: #fff; }
.launcher { margin: auto 0 auto auto; display: grid; grid-template-columns: repeat(3, 4.500px); gap: 4.200px; }
.launcher i { width: 4.500px; height: 4.500px; border-radius: 50%; background: #f4f4f4; }
```
